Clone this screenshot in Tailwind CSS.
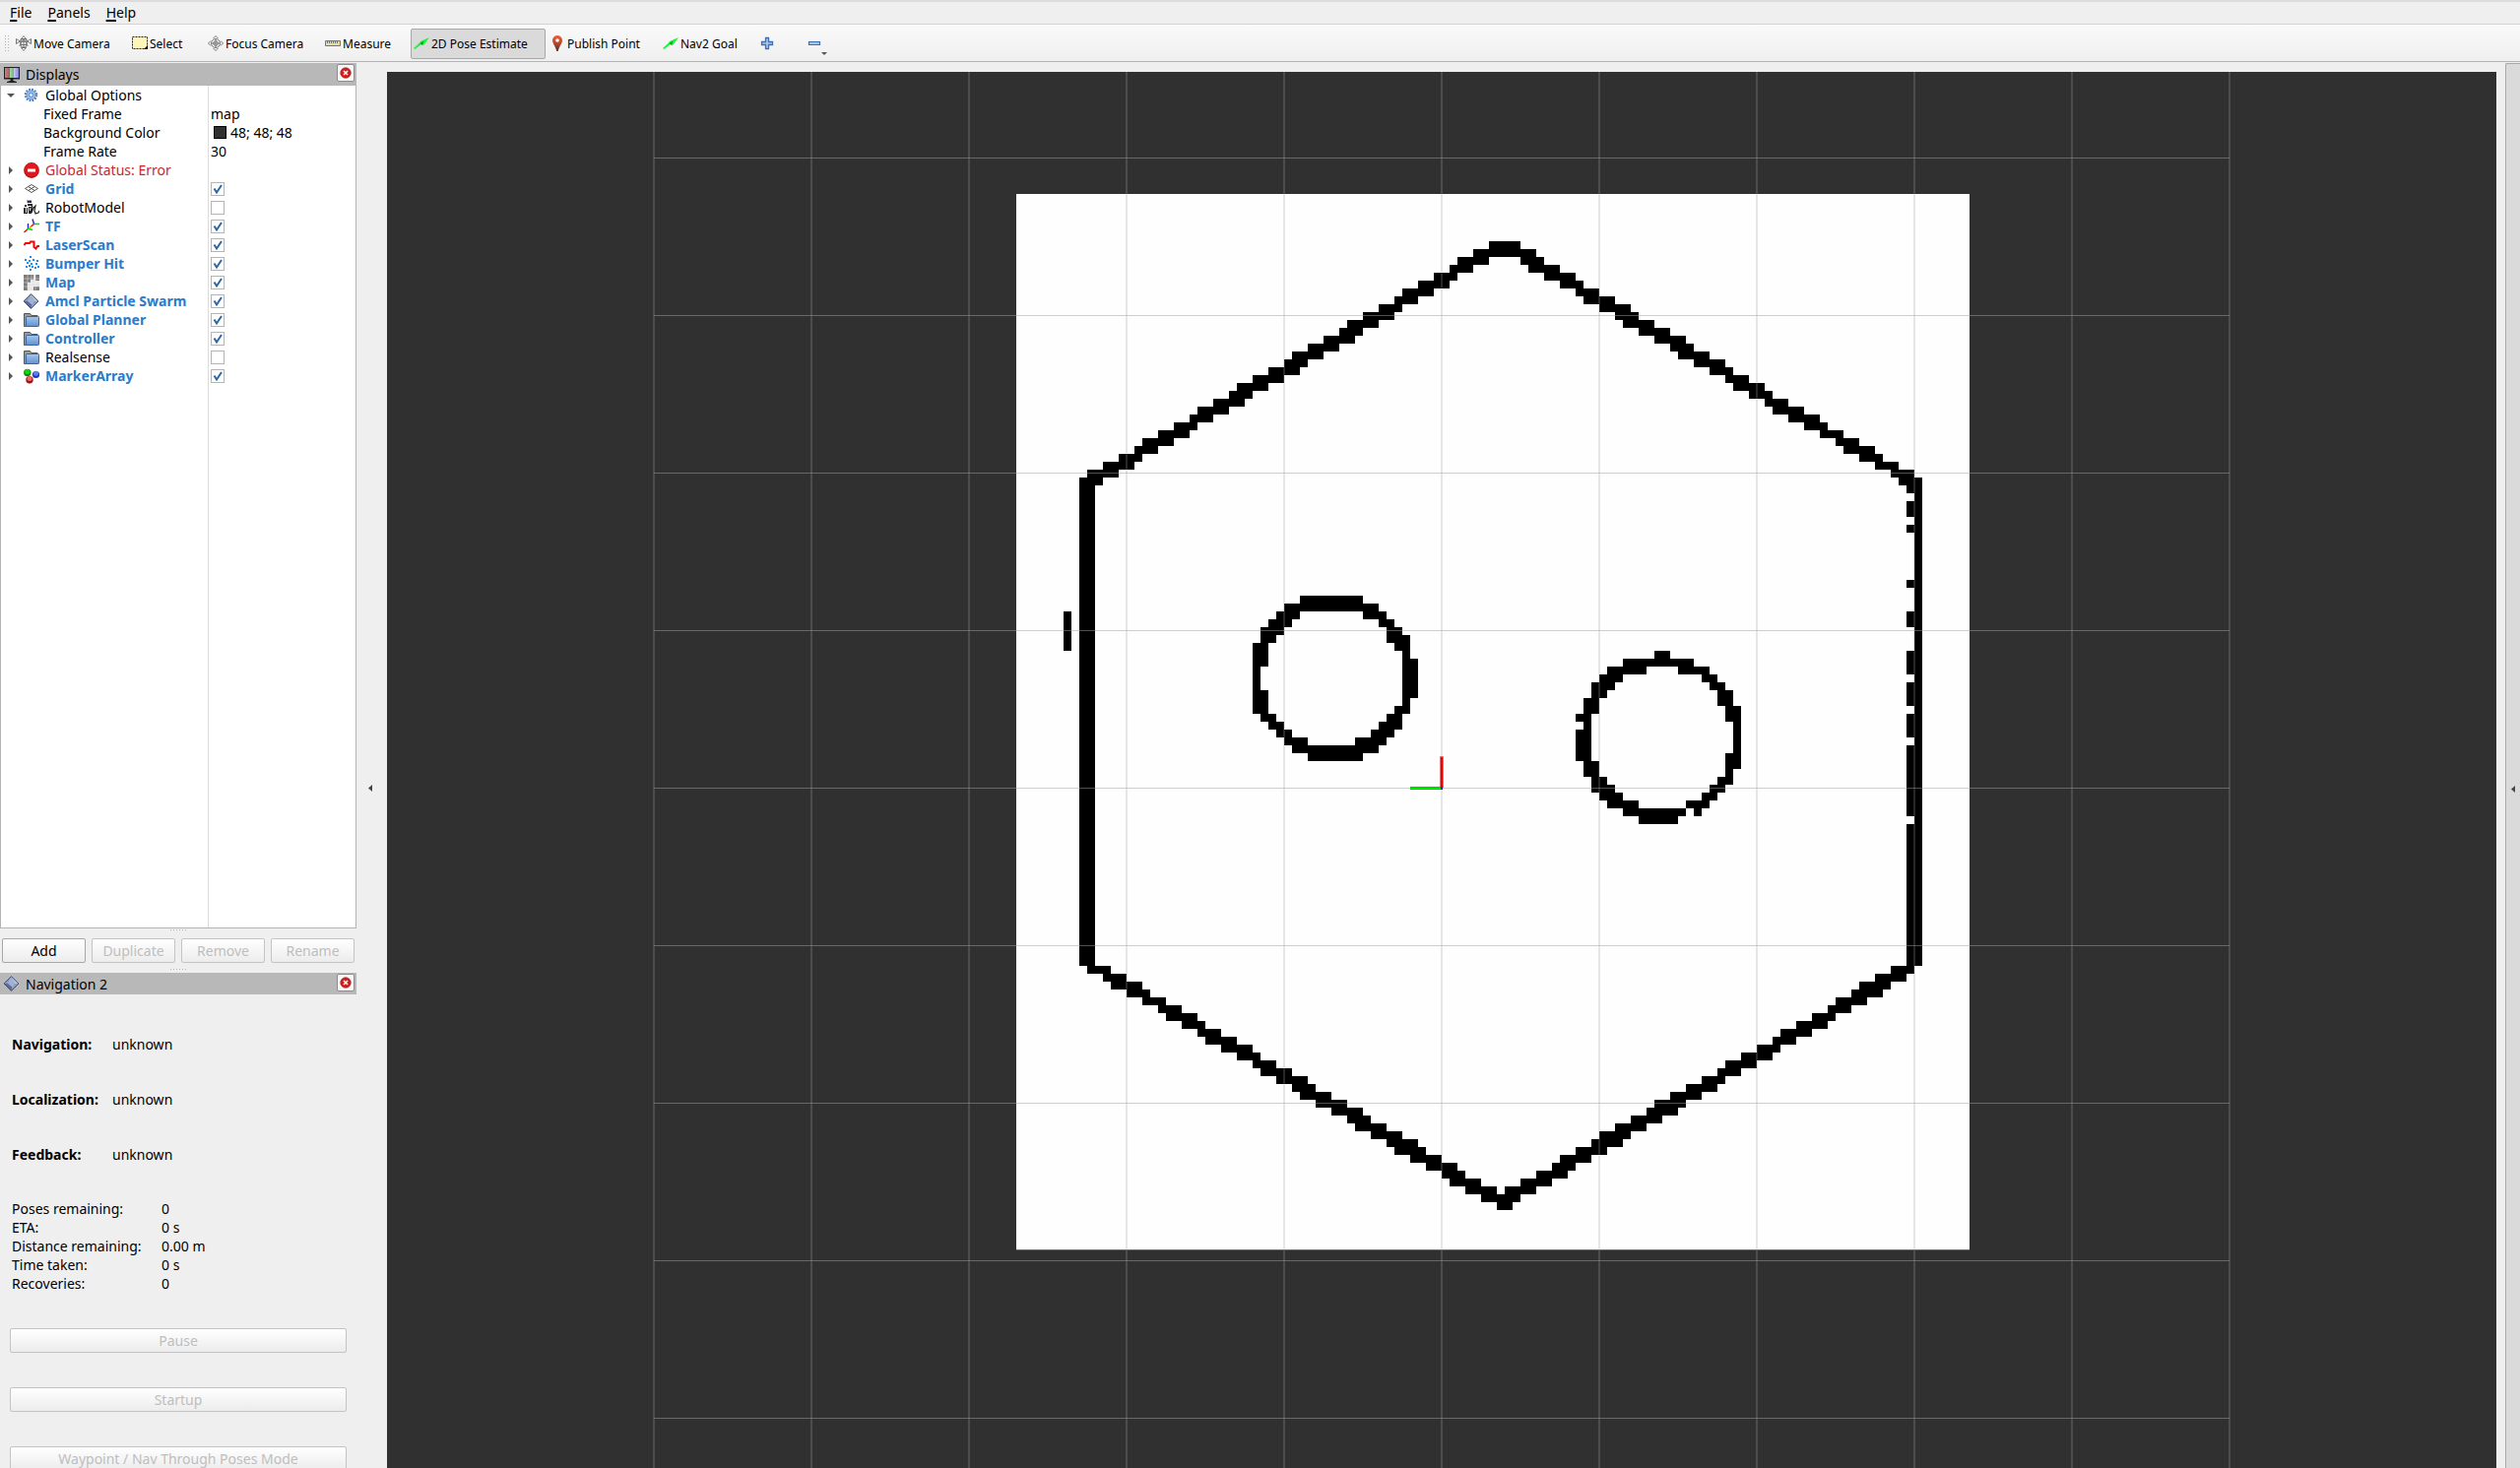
<!DOCTYPE html>
<html lang="en">
<head>
    <meta charset="UTF-8">
    <meta name="viewport" content="width=device-width, initial-scale=1.0">
    <title>RViz</title>
    <script src="https://cdn.jsdelivr.net/npm/@tailwindcss/browser@4"></script>
</head>
<body class="h-screen flex flex-col overflow-hidden bg-[#efefef] text-black text-[14px] leading-[19px] font-['Noto_Sans','Open_Sans',sans-serif]">

    <!-- Icon sprites -->
    <svg class="absolute size-0" aria-hidden="true">
        <defs>
            <linearGradient id="gBlue" x1="0" y1="0" x2="0" y2="1"><stop offset="0" stop-color="#a9c6ea"/><stop offset="1" stop-color="#5f92d0"/></linearGradient>
            <linearGradient id="gPin" x1="0" y1="0" x2="0" y2="1"><stop offset="0" stop-color="#f0603c"/><stop offset=".5" stop-color="#b5482a"/><stop offset="1" stop-color="#4a3420"/></linearGradient>
            <linearGradient id="gScreen" x1="0" y1="0" x2="1" y2="0"><stop offset="0" stop-color="#c98080"/><stop offset=".33" stop-color="#a86060"/><stop offset=".34" stop-color="#a6dca6"/><stop offset=".66" stop-color="#6fb56f"/><stop offset=".67" stop-color="#c4c4f4"/><stop offset="1" stop-color="#8585d8"/></linearGradient>
        </defs>
        <symbol id="move" viewBox="0 0 16 16">
            <g fill="#fff" stroke="#666" stroke-width=".9">
                <path d="M8 .6 5.500 3.500h5zM8 15.400 5.500 12.500h5zM.5 3.500v5L4.300 6zM15.500 3.500v5L11.700 6z"/>
                <rect x="5" y="4" width="6" height="5.500"/>
                <path d="M4 6h8M8 3v10M5 9.500 3.500 11M11 9.500l1.500 1.500"/>
                <circle cx="8" cy="9" r="3.300" fill="none"/>
            </g>
        </symbol>
        <symbol id="select" viewBox="0 0 16 16">
            <path fill="#fdf6b8" d="M.5 1.500h15v12H.5z"/>
            <path fill="none" stroke="#222" stroke-dasharray="2 1" d="M.5 1.500h15v12H.5z"/>
            <path d="M16 10v4h-4z"/>
        </symbol>
        <symbol id="focus" viewBox="0 0 16 16">
            <g fill="none" stroke="#777">
                <circle cx="8" cy="8" r="4.500"/><circle cx="8" cy="8" r="2.300"/>
                <path d="M8 4v8M4 8h8M5.500 3 8 .5 10.500 3M5.500 13 8 15.500l2.500-2.500M3 5.500.5 8 3 10.500M13 5.500 15.500 8 13 10.500"/>
            </g>
        </symbol>
        <symbol id="measure" viewBox="0 0 16 16">
            <path fill="#e6dba6" stroke="#757575" d="M.5 5.500h15v5H.5z"/>
            <path stroke="#757575" d="M2.500 6v2M4.500 6v2M6.500 6v2M8.500 6v2M10.500 6v2M12.500 6v2"/>
        </symbol>
        <symbol id="arrow" viewBox="0 0 16 16">
            <path fill="#1df53c" d="M0 13 6 7.500 7 6 16 2 10.500 9.500 9 10 7.800 9 1.500 14z"/>
            <path fill="#0a9c20" d="m6.500 8 4-2.500-1 2.500L9 10z"/>
        </symbol>
        <symbol id="pin" viewBox="0 0 16 16">
            <path fill="url(#gPin)" d="M8 0a5 5 0 0 0-5 5c0 3 3 6 4.300 11h1.400C10 11 13 8 13 5a5 5 0 0 0-5-5z"/>
            <circle cx="8" cy="5" r="1.800" fill="#fff"/>
        </symbol>
        <symbol id="plus" viewBox="0 0 16 16"><path fill="#a9c6ea" stroke="#3d6fb4" stroke-width="1.300" d="M6.500 2.500h3v4h4v3h-4v4h-3v-4h-4v-3h4z"/></symbol>
        <symbol id="minus" viewBox="0 0 16 16"><path fill="#a9c6ea" stroke="#3d6fb4" stroke-width="1.200" d="M2.500 6.500h11v3h-11z"/></symbol>
        <symbol id="monitor" viewBox="0 0 16 16">
            <path d="M0 0h16v12.500H9.500V14l3.500 1v1H3v-1l3.500-1v-1.500H0z" fill="#222"/>
            <path d="M1 1h14v10H1z" fill="url(#gScreen)"/>
        </symbol>
        <symbol id="diamond" viewBox="0 0 16 16">
            <path fill="#8c9cc0" d="M7.500.5 15 8l-7.500 7.500L0 8z"/>
            <path fill="#b9c4dc" d="M7.500.5 15 8H9z"/><path fill="#5d6c98" d="M0 8l7.500 7.500L9 8z"/><path fill="#a3b1d2" d="M7.500 1 4 8l5 4 2-5z"/>
            <path fill="none" stroke="#36456e" stroke-width=".9" d="M7.500.6 14.900 8l-7.400 7.400L.1 8z"/>
        </symbol>
        <symbol id="close" viewBox="0 0 12 12">
            <circle cx="6" cy="6" r="5.300" fill="#d01f1f" stroke="#9c1717" stroke-width=".6"/>
            <path stroke="#fff" stroke-width="1.500" d="m4 4 4 4M8 4 4 8"/>
        </symbol>
        <symbol id="gear" viewBox="0 0 16 16">
            <circle cx="7.500" cy="7.500" r="5.700" fill="none" stroke="#3f74bd" stroke-width="2" stroke-dasharray="1.700 1.280"/>
            <circle cx="7.500" cy="7.500" r="4.500" fill="#a4c4ea" stroke="#4a7ec4" stroke-width=".8"/>
            <circle cx="7.500" cy="7.500" r="2.300" fill="none" stroke="#4a7ec4" stroke-width=".7"/>
            <circle cx="7.500" cy="7.500" r="1" fill="#fff"/>
        </symbol>
        <symbol id="error" viewBox="0 0 16 16">
            <circle cx="8" cy="8" r="7.900" fill="#c40d12"/><circle cx="8" cy="7.500" r="6.800" fill="#e0191d"/>
            <rect x="4" y="6.500" width="8" height="3" rx=".5" fill="#fff"/>
        </symbol>
        <symbol id="grid" viewBox="0 0 16 16">
            <path fill="none" stroke="#444" stroke-width=".9" d="M1.500 7.500 8 3.500l6.500 4-6.500 4zM4.700 9.500l6.500-4M4.700 5.500l6.500 4"/>
        </symbol>
        <symbol id="robot" viewBox="0 0 16 16">
            <path fill="#a0a8c8" d="M3 0h5v3H3z"/><path fill="#222c60" d="M4 1h4v2H4z"/>
            <path fill="#222" d="M1 5h2v2H1zM4 4h5v2H4zM0 8h4v6H0zM5 7h3v7H5z"/>
            <path fill="none" stroke="#222" stroke-width="1.200" d="M8 5l1 3-1 5 2-5 2-2-1 5 1 3 3-1 1-2"/>
            <path stroke="#eee" d="M2.500 8v5M6.500 8v3"/>
        </symbol>
        <symbol id="tf" viewBox="0 0 16 16">
            <g fill="none" stroke-width="1.400">
                <path stroke="#f00" d="M.5 14 5 10M6.500 9l4-3.500"/><path stroke="#0d0" d="M10.500 5.500H16M4 10l5 1.500"/>
                <path stroke="#22d" d="M9 .5l1.500 5M4.500 5v5"/><path stroke="#fa0" d="M5 10l3-2"/>
            </g>
        </symbol>
        <symbol id="laser" viewBox="0 0 16 16">
            <path fill="none" stroke="#f00" stroke-width="2" d="M.5 8 2 6h4l1-1.500h3.500V10l2 1.500L14 9h2"/>
        </symbol>
        <symbol id="bumper" viewBox="0 0 16 16">
            <path fill="#1a8ff0" d="M6 0h2v2H6zM1 3h2v2H1zM5 4h2v2H5zM9 3h2v2H9zM13 4h2v2h-2zM3 6h2v2H3zM7 7h2v2H7zM2 10h2v2H2zM5 9h2v2H5zM8 10h2v2H8zM12 7h2v2h-2zM14 10h2v2h-2zM11 11h2v2h-2zM6 13h2v2H6z"/>
        </symbol>
        <symbol id="map" viewBox="0 0 16 16">
            <path fill="#e4e4e4" d="M0 0h16v16H0z"/><path fill="#7c7c7c" d="M0 0h10v5H7v3H4v8H0zM12 0h4v6h-4zM10 12h6v4h-6z"/>
            <path stroke="#fff" stroke-width=".4" d="M4 0v16M8 0v16M12 0v16M0 4h16M0 8h16M0 12h16"/>
        </symbol>
        <symbol id="folder" viewBox="0 0 16 16">
            <path fill="#9a9a96" stroke="#555" d="M.5 14.500V1.500h6l1.500 2h6v3H3v8z"/>
            <rect x="2.500" y="4.500" width="13" height="10" rx=".8" fill="url(#gBlue)" stroke="#3465a4"/>
        </symbol>
        <symbol id="marker" viewBox="0 0 16 16">
            <circle cx="3.800" cy="4.500" r="3.700" fill="#0a8c0a"/><circle cx="3.800" cy="3.500" r="2.600" fill="#11d911"/>
            <circle cx="12.500" cy="6.500" r="3.600" fill="#1a36b8"/><circle cx="12.500" cy="5.200" r="2.500" fill="#5b80f0"/>
            <circle cx="6" cy="11.800" r="3.700" fill="#a01212"/><circle cx="6" cy="10.500" r="2.500" fill="#f06a6a"/>
        </symbol>
    </svg>

    <!-- Menu bar -->
    <nav class="h-[25px] shrink-0 flex items-center gap-4 px-2.5 border-t-2 border-b border-b-[#d2d2d2] border-t-[#dcdcdc] leading-5">
        <a href="#"><span class="underline decoration-2 underline-offset-2">F</span>ile</a>
        <a href="#"><span class="underline decoration-2 underline-offset-2">P</span>anels</a>
        <a href="#"><span class="underline decoration-2 underline-offset-2">H</span>elp</a>
    </nav>

    <!-- Tools -->
    <div class="h-[38px] shrink-0 flex items-center pl-1 pt-px border-b border-[#b4b4b4] bg-linear-to-b from-[#fafafa] to-[#efefef] text-[12px]">
        <svg class="w-[9px] h-4 shrink-0" viewBox="0 0 9 16" aria-hidden="true"><path stroke="#b4b4b4" stroke-dasharray="1 2" d="M1.500 0v16M4.500 0v16"/></svg>
        <button class="w-[118px] h-[31px] pl-[3px] flex items-center gap-0.5 whitespace-nowrap"><svg class="size-4 shrink-0"><use href="#move"/></svg>Move Camera</button>
        <button class="w-[77px] h-[31px] pl-[3px] flex items-center gap-0.5 whitespace-nowrap"><svg class="size-4 shrink-0"><use href="#select"/></svg>Select</button>
        <button class="w-[119px] h-[31px] pl-[3px] flex items-center gap-0.5 whitespace-nowrap"><svg class="size-4 shrink-0"><use href="#focus"/></svg>Focus Camera</button>
        <button class="w-[90px] h-[31px] pl-[3px] flex items-center gap-0.5 whitespace-nowrap"><svg class="size-4 shrink-0"><use href="#measure"/></svg>Measure</button>
        <button class="w-[137px] h-[31px] pl-0.5 flex items-center gap-0.5 whitespace-nowrap rounded-xs border border-[#a8a8a8] bg-[#dadada]" aria-pressed="true"><svg class="size-4 shrink-0"><use href="#arrow"/></svg>2D Pose Estimate</button>
        <button class="w-[116px] h-[31px] pl-1 flex items-center gap-0.5 whitespace-nowrap"><svg class="size-4 shrink-0"><use href="#pin"/></svg>Publish Point</button>
        <button class="w-[98px] h-[31px] pl-[3px] flex items-center gap-0.5 whitespace-nowrap"><svg class="size-4 shrink-0"><use href="#arrow"/></svg>Nav2 Goal</button>
        <button class="w-[48px] h-[31px] pl-[3px] flex items-center" aria-label="Add tool"><svg class="size-4"><use href="#plus"/></svg></button>
        <button class="w-[32px] h-[31px] pl-[3px] flex items-center relative" aria-label="Remove tool">
            <svg class="size-4"><use href="#minus"/></svg>
            <svg class="absolute left-[18px] bottom-1 w-[6px] h-[3px]" viewBox="0 0 6 3"><path fill="#555" d="M0 0h6L3 3z"/></svg>
        </button>
    </div>

    <main class="flex-1 min-h-0 flex">
        <!-- Left docks -->
        <aside class="w-[362px] shrink-0 flex flex-col pt-px">
            <section class="shrink-0 flex flex-col">
                <header class="h-[23px] flex items-center justify-between pl-1 pr-0.5 bg-[#b8b8b8]">
                    <h2 class="flex items-center gap-1.5"><svg class="size-4"><use href="#monitor"/></svg>Displays</h2>
                    <button class="size-[18px] mb-1 flex items-center justify-center rounded-xs border border-[#8c8c8c] bg-[#f8f8f8]" aria-label="Close Displays"><svg class="size-3"><use href="#close"/></svg></button>
                </header>
                <div class="h-[856px] relative bg-white border-x border-b border-[#b4b4b4]">
                    <div class="absolute inset-y-0 left-[210px] w-px bg-[#dcdcdc]"></div>
                    <table class="w-full table-fixed">
                        <colgroup><col class="w-[211px]"><col></colgroup>
                        <tbody id="displays"></tbody>
                    </table>
                </div>
            </section>

            <svg class="w-[16px] h-[10px] shrink-0 mx-auto" viewBox="0 0 16 10" aria-hidden="true"><path stroke="#b4b4b4" stroke-dasharray="1 2" d="M0 1.500h16"/></svg>
            <div class="shrink-0 px-0.5 grid grid-cols-4 gap-1.5">
                <button class="h-[25px] rounded-xs border border-[#a8a8a8] bg-linear-to-b from-white to-[#ececec]">Add</button>
                <button class="h-[25px] rounded-xs border border-[#c4c4c4] bg-linear-to-b from-white to-[#ececec] text-[#bebebe]" disabled>Duplicate</button>
                <button class="h-[25px] rounded-xs border border-[#c4c4c4] bg-linear-to-b from-white to-[#ececec] text-[#bebebe]" disabled>Remove</button>
                <button class="h-[25px] rounded-xs border border-[#c4c4c4] bg-linear-to-b from-white to-[#ececec] text-[#bebebe]" disabled>Rename</button>
            </div>
            <svg class="w-[16px] h-[10px] shrink-0 mx-auto" viewBox="0 0 16 10" aria-hidden="true"><path stroke="#b4b4b4" stroke-dasharray="1 2" d="M0 6.500h16"/></svg>

            <section class="shrink-0">
                <header class="h-[22px] flex items-center justify-between pl-1 pr-0.5 bg-[#b8b8b8]">
                    <h2 class="flex items-center gap-1.5"><svg class="size-4"><use href="#diamond"/></svg>Navigation 2</h2>
                    <button class="size-[18px] mb-0.5 flex items-center justify-center rounded-xs border border-[#8c8c8c] bg-[#f8f8f8]" aria-label="Close Navigation 2"><svg class="size-3"><use href="#close"/></svg></button>
                </header>
                <dl class="pt-[22px] pl-3 grid grid-cols-[102px_1fr] auto-rows-[56px] items-center">
                    <dt class="font-bold">Navigation:</dt><dd>unknown</dd>
                    <dt class="font-bold">Localization:</dt><dd>unknown</dd>
                    <dt class="font-bold">Feedback:</dt><dd>unknown</dd>
                </dl>
                <dl class="pt-[18px] pl-3 grid grid-cols-[152px_1fr]">
                    <dt>Poses remaining:</dt><dd>0</dd>
                    <dt>ETA:</dt><dd>0 s</dd>
                    <dt>Distance remaining:</dt><dd>0.00 m</dd>
                    <dt>Time taken:</dt><dd>0 s</dd>
                    <dt>Recoveries:</dt><dd>0</dd>
                </dl>
                <div class="mt-9 px-2.5 flex flex-col gap-[35px] text-[#bebebe]">
                    <button class="h-[25px] rounded-xs border border-[#c4c4c4] bg-linear-to-b from-white to-[#ececec]" disabled>Pause</button>
                    <button class="h-[25px] rounded-xs border border-[#c4c4c4] bg-linear-to-b from-white to-[#ececec]" disabled>Startup</button>
                    <button class="h-[25px] rounded-xs border border-[#c4c4c4] bg-linear-to-b from-white to-[#ececec]" disabled>Waypoint / Nav Through Poses Mode</button>
                </div>
            </section>
        </aside>

        <button class="w-[31px] shrink-0 flex items-center justify-center pt-[46px] pr-[3px]" aria-label="Hide left dock"><svg class="w-1 h-[7px]" viewBox="0 0 4 7"><path fill="#444" d="M4 0v7L0 3.500z"/></svg></button>

        <!-- 3D view, origin of the drawing is the origin of the map frame -->
        <section class="flex-1 min-w-0 mt-[10px] bg-[#303030]">
            <svg class="w-full h-full" viewBox="-1071 -727 2142 1418" preserveAspectRatio="xMidYMid slice" shape-rendering="crispEdges" role="img" aria-label="Occupancy map">
                <g transform="translate(-432 -603) scale(8)">
                    <path fill="#fefefe" d="M0 0h121v134H0z"/>
                    <!-- walls, two cells high -->
                    <path stroke="#000" stroke-width="2" d="M60 7h4M58 8h2M56 9h2M55 10h1M53 11h2M51 12h2M49 13h2M48 14h1M46 15h2M44 16h2M42 17h2M41 18h2M39 19h2M37 20h2M35 21h2M34 22h2M32 23h2M30 24h2M28 25h2M27 26h2M25 27h2M23 28h2M22 29h1M20 30h2M18 31h2M16 32h2M15 33h1M13 34h2M11 35h2M9 36h2
                        M64 8h2M65 9h2M67 10h2M69 11h2M71 12h1M72 13h2M74 14h2M76 15h2M77 16h2M79 17h2M81 18h2M83 19h2M84 20h2M86 21h2M88 22h2M90 23h1M91 24h2M93 25h2M95 26h1M96 27h2M98 28h2M100 29h2M102 30h1M104 31h1M105 32h2M107 33h2M109 34h1M111 35h1M112 36h2
                        M11 99h1M12 100h2M14 101h2M16 102h1M18 103h1M19 104h2M21 105h2M23 106h1M24 107h2M26 108h2M28 109h2M30 110h1M31 111h2M33 112h2M35 113h2M36 114h2M38 115h2M40 116h2M42 117h2M43 118h2M45 119h2M47 120h2M48 121h3M50 122h2M52 123h2M54 124h2M55 125h2M57 126h2M59 127h2M61 128h2
                        M62 127h2M64 126h2M66 125h2M68 124h2M69 123h2M71 122h2M73 121h2M74 120h3M76 119h2M78 118h2M80 117h2M81 116h3M83 115h2M85 114h2M87 113h2M89 112h1M90 111h2M92 110h2M94 109h2M96 108h1M97 107h2M99 106h2M101 105h2M103 104h1M104 103h2M106 102h2M107 101h3M109 100h2M111 99h2"/>
                    <path d="M8 36h2v62H8zM6 53h1v5H6zM114 36h1v62h-1zM113 35h1v3h-1zM113 39h1v2h-1zM113 42h1v1h-1zM113 49h1v1h-1zM113 53h1v2h-1zM113 58h1v3h-1zM113 62h1v3h-1zM113 66h1v3h-1zM113 70h1v9h-1zM113 80h1v19h-1z"/>
                    <!-- single rows: corners and the two round obstacles -->
                    <path stroke="#000" stroke-width="1" transform="translate(0 .5)" d="M9 98h3M16 102h3M102 30h3M109 34h3M111 35h3
                        M36 51h8M34 52h12M33 53h3M44 53h3M32 54h3M46 54h2M31 55h3M47 55h2M31 56h2M47 56h3M30 57h2M48 57h2M30 58h2M49 58h1M30 59h2M49 59h2M30 60h1M49 60h2M30 61h1M49 61h2M30 62h1M49 62h2M30 63h2M49 63h2M30 64h2M49 64h1M30 65h2M48 65h2M31 66h2M47 66h2M32 67h2M46 67h3M33 68h2M45 68h3M34 69h3M43 69h4M35 70h11M37 71h7
                        M81 58h2M77 59h9M75 60h5M84 60h4M74 61h3M87 61h2M73 62h3M88 62h2M73 63h2M89 63h2M72 64h2M89 64h2M72 65h2M90 65h2M71 66h2M90 66h2M72 67h1M91 67h1M71 68h2M91 68h1M71 69h2M91 69h1M71 70h2M91 70h1M71 71h2M90 71h2M72 72h2M90 72h2M72 73h2M90 73h1M73 74h2M89 74h2M73 75h3M88 75h2M74 76h3M87 76h2M75 77h4M85 77h3M77 78h8M86 78h1M79 79h5"/>
                </g>
                <path fill="#6a6a6a" d="M-432 469h968v1h-968z"/>
                <!-- one metre grid -->
                <path stroke="#a0a0a0" stroke-opacity=".25" stroke-width="2" d="M-800-727v1418M-640-727v1418M-480-727v1418M-320-727v1418M-160-727v1418M0-727v1418M160-727v1418M320-727v1418M480-727v1418M640-727v1418M800-727v1418"/>
                <path stroke="#a0a0a0" stroke-opacity=".5" d="M-800-639.500H800M-800-479.500H800M-800-319.500H800M-800-159.500H800M-800 .5H800M-800 160.500H800M-800 320.500H800M-800 480.500H800M-800 640.500H800"/>
                <!-- robot axes -->
                <path fill="#d87878" d="M-2-32h4V0h-4z"/><path fill="#f00000" d="M-1-31h2V0h-2z"/>
                <path fill="#0cb40c" d="M-32-1H0v3h-32z"/><path fill="#00ff00" d="M-32 0H0v1h-32z"/>
                <path fill="#1a1af0" d="M-1-1h2v3h-2z"/>
            </svg>
        </section>

        <div class="w-[9px] shrink-0"></div>
        <button class="w-[15px] shrink-0 mt-px flex items-center justify-center pt-[46px] rounded-tl-xs border-l border-t border-[#a8a8a8] bg-[#dadada]" aria-label="Show right dock"><svg class="w-1 h-[7px]" viewBox="0 0 4 7"><path fill="#444" d="M4 0v7L0 3.500z"/></svg></button>
    </main>

    <script>
        // enabled: true / false draws a tick box, undefined draws none
        const displays = [
            { name: "Global Options", icon: "gear", open: true },
            { name: "Fixed Frame", value: "map" },
            { name: "Background Color", value: "48; 48; 48", swatch: true },
            { name: "Frame Rate", value: "30" },
            { name: "Global Status: Error", icon: "error", color: "text-[#c8282c]" },
            { name: "Grid", icon: "grid", enabled: true },
            { name: "RobotModel", icon: "robot", enabled: false },
            { name: "TF", icon: "tf", enabled: true },
            { name: "LaserScan", icon: "laser", enabled: true },
            { name: "Bumper Hit", icon: "bumper", enabled: true },
            { name: "Map", icon: "map", enabled: true },
            { name: "Amcl Particle Swarm", icon: "diamond", enabled: true },
            { name: "Global Planner", icon: "folder", enabled: true },
            { name: "Controller", icon: "folder", enabled: true },
            { name: "Realsense", icon: "folder", enabled: false },
            { name: "MarkerArray", icon: "marker", enabled: true }
        ];

        function nameCell(d, i) {
            if (!d.icon) {
                return `<div class="pl-[43px] leading-[19px]">${d.name}</div>`;
            }
            const arrow = d.open ? "M0 2h8L4 6z" : "M2 0v8l4-4z";
            const color = d.color || (d.enabled ? "text-[#2a7bcb] font-bold" : "");
            const tag = d.enabled === undefined ? "span" : "label";
            return `<div class="flex items-center pl-1.5 h-[19px]">
                <svg class="size-2 mr-[9px] shrink-0" viewBox="0 0 8 8"><path fill="#555" d="${arrow}"/></svg>
                <svg class="size-4 mr-1.5 shrink-0"><use href="#${d.icon}"/></svg>
                <${tag} ${tag === "label" ? `for="display${i}"` : ""} class="whitespace-nowrap ${color}">${d.name}</${tag}>
            </div>`;
        }

        function valueCell(d, i) {
            if (d.enabled !== undefined) {
                return `<div class="grid w-[14px] ml-[2px]">
                    <input type="checkbox" id="display${i}" ${d.enabled ? "checked" : ""} class="peer appearance-none size-[14px] border border-[#b4b4b4] bg-white col-start-1 row-start-1">
                    <svg class="hidden peer-checked:block size-[14px] col-start-1 row-start-1 pointer-events-none" viewBox="0 0 14 14"><path fill="none" stroke="#2a66a8" stroke-width="2" d="M3.500 6.500 6 10.500 11 3"/></svg>
                </div>`;
            }
            const swatch = d.swatch ? `<span class="size-[13px] ml-[3px] mr-1 bg-[#303030] border border-black"></span>` : "";
            return `<div class="flex items-center pl-0.5 h-[19px]">${swatch}${d.value || ""}</div>`;
        }

        document.getElementById("displays").innerHTML = displays.map((d, i) =>
            `<tr class="h-[19px]"><td class="p-0">${nameCell(d, i)}</td><td class="p-0">${valueCell(d, i)}</td></tr>`
        ).join("");
    </script>
</body>
</html>
